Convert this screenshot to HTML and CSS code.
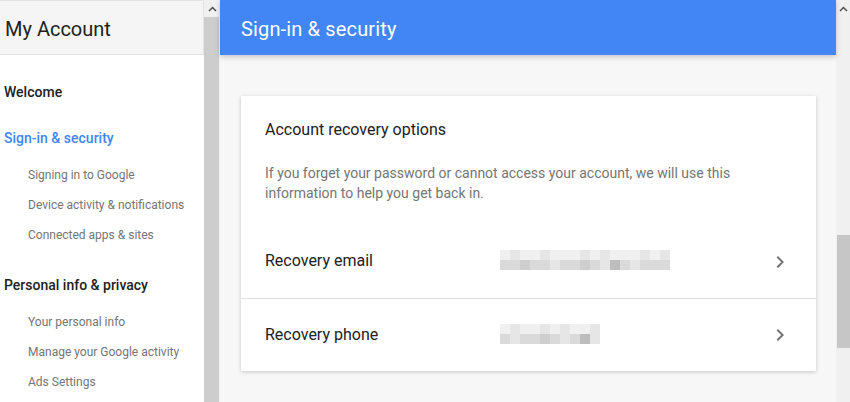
FILE: index.html
```html
<!DOCTYPE html>
<html lang="en">
<head>
    <meta charset="UTF-8">
    <meta name="viewport" content="width=device-width, initial-scale=1.0">
    <title>My Account - Sign-in &amp; security</title>
    <link rel="stylesheet" href="styles.css">
</head>
<body>
    <div class="sidebar">
        <div class="sidebar-header">My Account</div>
        <nav class="nav">
            <div class="nav-item">Welcome</div>
            <div class="nav-item active">Sign-in &amp; security</div>
            <div class="nav-sub">
                <div class="nav-sub-item">Signing in to Google</div>
                <div class="nav-sub-item">Device activity &amp; notifications</div>
                <div class="nav-sub-item">Connected apps &amp; sites</div>
            </div>
            <div class="nav-item">Personal info &amp; privacy</div>
            <div class="nav-sub">
                <div class="nav-sub-item">Your personal info</div>
                <div class="nav-sub-item">Manage your Google activity</div>
                <div class="nav-sub-item">Ads Settings</div>
            </div>
        </nav>
    </div>

    <div class="scrollbar scrollbar-left">
        <div class="scroll-arrow">
            <svg width="9" height="6" viewBox="0 0 9 6"><path d="M1 5l3.5-3.5L8 5" fill="none" stroke="#505050" stroke-width="1.5"/></svg>
        </div>
        <div class="scroll-thumb"></div>
    </div>

    <main class="main">
        <header class="main-header">Sign-in &amp; security</header>

        <section class="card">
            <div class="card-intro">
                <h2 class="card-title">Account recovery options</h2>
                <p class="card-desc">If you forget your password or cannot access your account, we will use this information to help you get back in.</p>
            </div>

            <div class="row row-first">
                <span class="row-label">Recovery email</span>
                <div class="blur">
                    <div class="blur-line">
                        <i class="g1"></i><i class="g2"></i><i class="g1"></i><i class="g1"></i><i class="g2"></i><i class="g1"></i><i class="g1"></i><i class="g1"></i><i class="g2"></i><i class="g1"></i><i class="g2"></i><i class="g1"></i><i class="g1"></i><i class="g1"></i><i class="g2"></i><i class="g1"></i><i class="g2"></i>
                    </div>
                    <div class="blur-line">
                        <i class="g3"></i><i class="g3"></i><i class="g4"></i><i class="g3"></i><i class="g3"></i><i class="g2"></i><i class="g3"></i><i class="g3"></i><i class="g4"></i><i class="g3"></i><i class="g2"></i><i class="g5"></i><i class="g3"></i><i class="g2"></i><i class="g3"></i><i class="g3"></i><i class="g3"></i>
                    </div>
                </div>
                <svg class="chevron" width="24" height="24" viewBox="0 0 24 24"><path d="M10 6L8.59 7.41 13.17 12l-4.58 4.59L10 18l6-6z" fill="#757575"/></svg>
            </div>

            <div class="row">
                <span class="row-label">Recovery phone</span>
                <div class="blur">
                    <div class="blur-line">
                        <i class="g1"></i><i class="g2"></i><i class="g1"></i><i class="g1"></i><i class="g2"></i><i class="g1"></i><i class="g2"></i><i class="g1"></i><i class="g1"></i><i class="g2"></i>
                    </div>
                    <div class="blur-line">
                        <i class="g3"></i><i class="g2"></i><i class="g3"></i><i class="g3"></i><i class="g4"></i><i class="g3"></i><i class="g2"></i><i class="g3"></i><i class="g5"></i><i class="g2"></i>
                    </div>
                </div>
                <svg class="chevron" width="24" height="24" viewBox="0 0 24 24"><path d="M10 6L8.59 7.41 13.17 12l-4.58 4.59L10 18l6-6z" fill="#757575"/></svg>
            </div>
        </section>
    </main>

    <div class="scrollbar scrollbar-right">
        <div class="scroll-arrow">
            <svg width="9" height="6" viewBox="0 0 9 6"><path d="M1 5l3.5-3.5L8 5" fill="none" stroke="#505050" stroke-width="1.5"/></svg>
        </div>
        <div class="scroll-thumb"></div>
    </div>
</body>
</html>
```

FILE: styles.css
```css
body {
    margin: 0;
    height: 402px;
    overflow: hidden;
    display: flex;
    font-family: Roboto, "Noto Sans", sans-serif;
    background: #fff;
}

/* Left navigation */
.sidebar {
    width: 204px;
    flex-shrink: 0;
    background: #fff;
}

.sidebar-header {
    height: 51px;
    padding: 2px 0 0 5px;
    display: flex;
    align-items: center;
    font-size: 20px;
    color: #212121;
    background: #f5f5f5;
    border-top: 1px solid #e3e3e3;
    border-right: 1px solid #e3e3e3;
    border-bottom: 1px solid #e0e0e0;
}

.nav {
    padding-top: 13px;
}

.nav-item {
    padding: 14px 0 12px 4px;
    line-height: 20px;
    font-size: 14px;
    font-weight: 500;
    color: #212121;
    white-space: nowrap;
}

.nav-item.active {
    color: #4285f4;
}

.nav-sub {
    margin-bottom: 11px;
}

.nav-sub-item {
    padding-left: 28px;
    line-height: 30px;
    font-size: 12px;
    color: #757575;
    white-space: nowrap;
}

/* Fake scrollbars */
.scrollbar {
    flex-shrink: 0;
    display: flex;
    flex-direction: column;
    background: #f0f0f0;
}

.scrollbar-left {
    width: 16px;
}

.scrollbar-right {
    width: 14px;
}

.scroll-arrow {
    height: 17px;
    display: flex;
    align-items: center;
    justify-content: center;
}

.scrollbar-left .scroll-thumb {
    flex: 1;
    width: 15px;
    background: #cdcdcd;
}

.scrollbar-right .scroll-thumb {
    margin: 218px 0 0 1px;
    height: 113px;
    background: #c6c6c6;
}

/* Main content */
.main {
    flex: 1;
    background: #f7f7f7;
}

.main-header {
    height: 53px;
    padding: 2px 0 0 21px;
    display: flex;
    align-items: center;
    font-size: 20px;
    letter-spacing: 0.15px;
    color: #fff;
    background: #4285f4;
    box-shadow: 0 2px 5px rgba(0, 0, 0, 0.2);
    position: relative;
}

.card {
    margin: 41px 20px 0 21px;
    background: #fff;
    box-shadow: 0 1px 4px rgba(0, 0, 0, 0.2);
}

.card-intro {
    padding: 24px 24px 22px;
}

.card-title {
    margin: 0;
    line-height: 20px;
    font-size: 16px;
    font-weight: 400;
    color: #212121;
}

.card-desc {
    margin: 23px 0 0;
    line-height: 20px;
    font-size: 14px;
    color: #757575;
}

.row {
    box-sizing: border-box;
    height: 73px;
    padding: 0 24px;
    display: flex;
    align-items: center;
    border-top: 1px solid #e0e0e0;
}

.row-first {
    border-top: none;
}

.row-label {
    width: 235px;
    margin-bottom: 2px;
    font-size: 16px;
    color: #212121;
}

.blur {
    flex: 1;
    margin-top: -3px;
}

.blur-line {
    display: flex;
}

.blur-line i {
    width: 10px;
    height: 10px;
}

.g1 { background: #f0f0f0; }
.g2 { background: #e6e6e6; }
.g3 { background: #dadada; }
.g4 { background: #cecece; }
.g5 { background: #bdbdbd; }
```
